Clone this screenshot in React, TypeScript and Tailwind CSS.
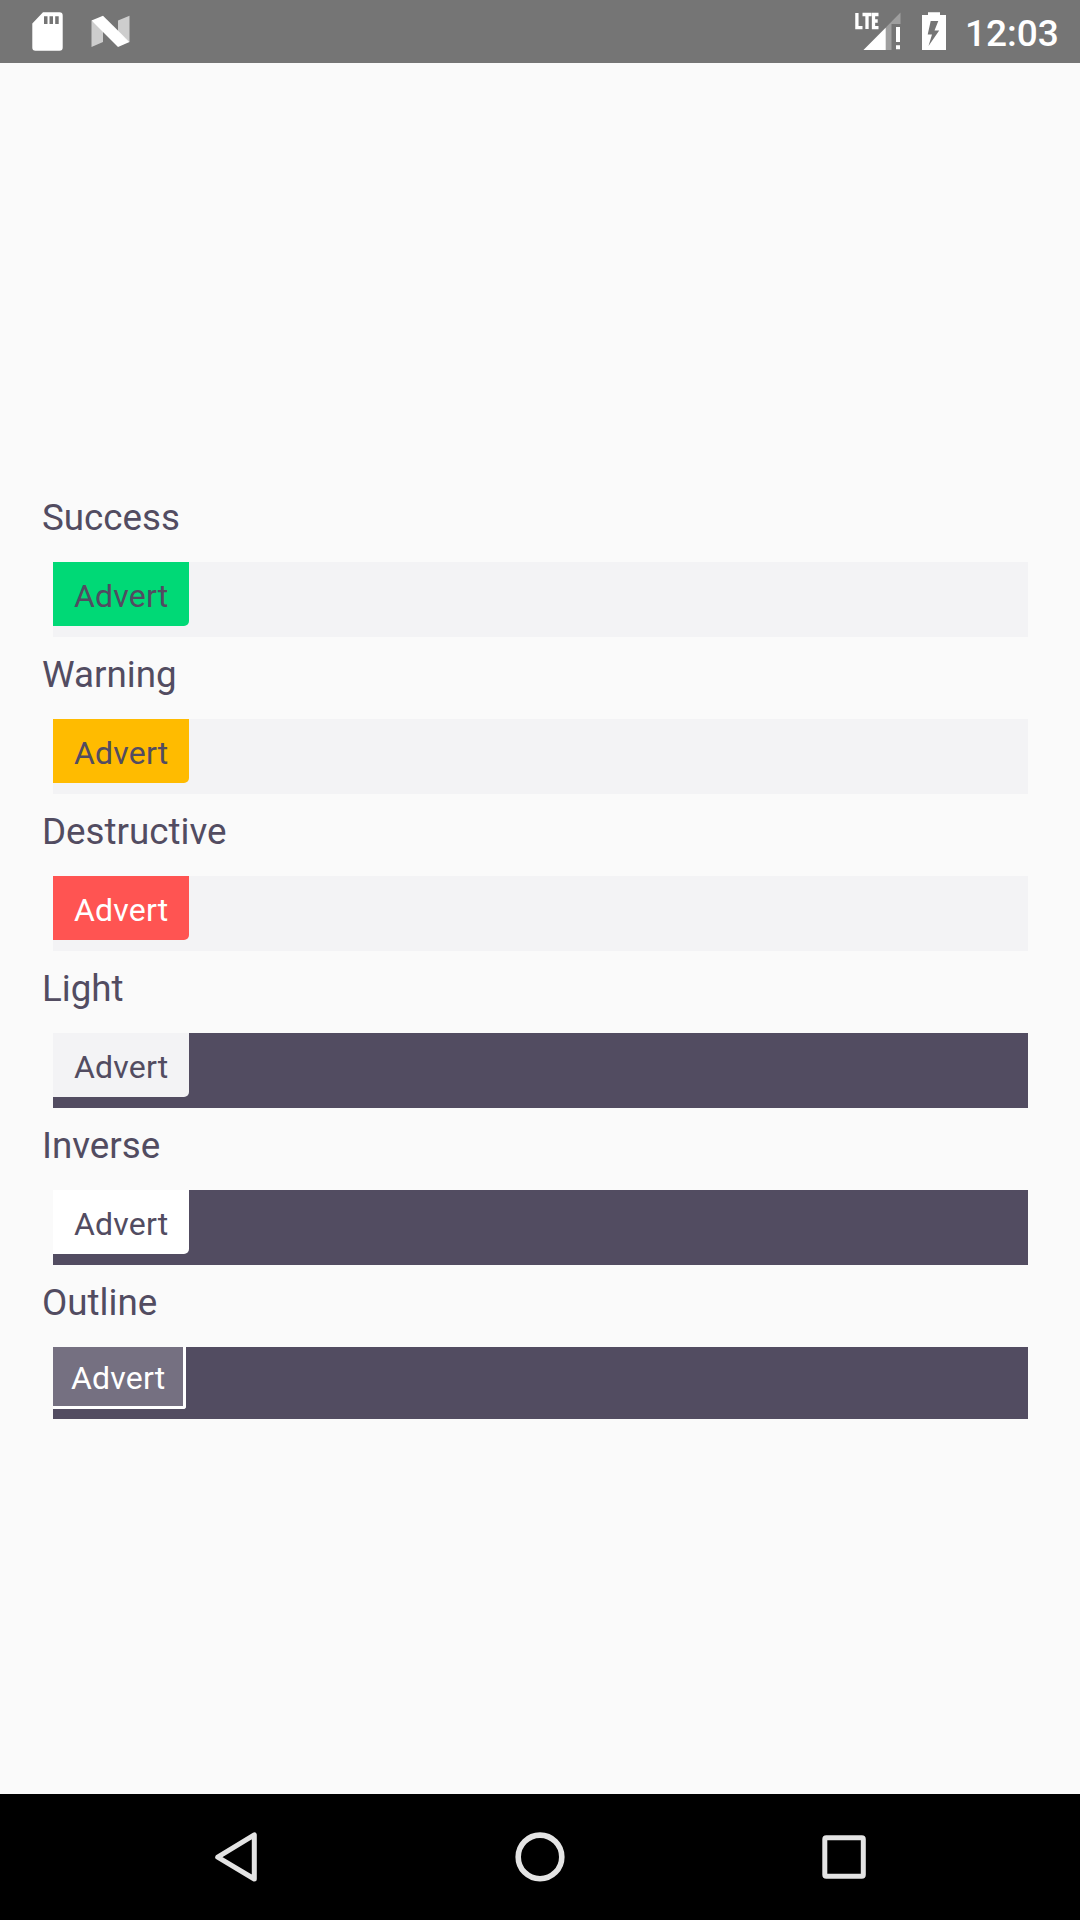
const rows = [
  { label: 'Success', bar: 'bg-[#f3f3f5]', badge: 'bg-[#00d976] text-[#524c61]' },
  { label: 'Warning', bar: 'bg-[#f3f3f5]', badge: 'bg-[#ffbb00] text-[#524c61]' },
  { label: 'Destructive', bar: 'bg-[#f3f3f5]', badge: 'bg-[#ff5452] text-white' },
  { label: 'Light', bar: 'bg-[#524c61]', badge: 'bg-[#f3f3f5] text-[#524c61]' },
  { label: 'Inverse', bar: 'bg-[#524c61]', badge: 'bg-white text-[#524c61]' },
  { label: 'Outline', bar: 'bg-[#524c61]', badge: 'bg-[#757081] text-white', outline: true },
];

function StatusBar() {
  return (
    <header className="flex h-[63px] shrink-0 items-start bg-[#757575] text-white">
      <svg width="180" height="63" viewBox="0 0 180 63">
        <path fillRule="evenodd" fill="#fff" d="M43 12.3H59.5A3.2 3.2 0 0 1 62.7 15.500V47.500A3.200 3.200 0 0 1 59.500 50.700H35.500A3.200 3.200 0 0 1 32.300 47.500V23.500ZM44 16.300V24H47.500V16.300ZM49.500 16.300V24H53V16.300ZM55.200 16.300V24H58.700V16.300Z" />
        <path fill="#cdcdcd" d="M91.500 20.500L103 29V42L91.500 47ZM118 20.500L129.500 15.700V42L118 32Z" />
        <path fill="#fff" d="M91.500 20.500L103 15.700L129.500 42L118 47Z" />
      </svg>
      <svg className="ml-auto" width="114" height="63" viewBox="846 0 114 63">
        <path fill="#9f9f9f" d="M900.500 12.500V24H891.500V50H863.500Z" />
        <path fill="#fff" d="M863.500 50L885.700 27.800V50ZM896 27H900V42H896ZM896 45.300H900V49.300H896Z" />
        <path fill="none" stroke="#fff" strokeWidth="3.300" d="M856.900 13V27.700H862.500M862.500 14.500H871.500M867 14.500V29M878.500 14.500H873.500V27.700H878.500M873.500 21H877.700" />
        <path fillRule="evenodd" fill="#fff" d="M928 12.200H940V15H946V50H922V15H928ZM930.700 21L927.700 34.500H932L928.500 46L939.200 30.500H934.500L938.300 21Z" />
      </svg>
      <time className="w-[120px] pl-[5px] text-[37px] leading-[67px] font-medium">12:03</time>
    </header>
  );
}

function NavigationBar() {
  return (
    <nav className="grid h-[126px] shrink-0 grid-cols-[304px_304px_304px] justify-center bg-black">
      <svg className="size-full" viewBox="84 1794 304 126" fill="none" stroke="#e4e4e4" strokeWidth="5" strokeLinejoin="round">
        <path d="M217.700 1857.200L254.300 1834.800V1879Z" />
      </svg>
      <svg className="size-full" viewBox="388 1794 304 126" fill="none" stroke="#e4e4e4" strokeWidth="5.600">
        <circle cx="540" cy="1856.900" r="21.800" />
      </svg>
      <svg className="size-full" viewBox="692 1794 304 126" fill="none" stroke="#e4e4e4" strokeWidth="5">
        <rect x="824.800" y="1837.800" width="38.500" height="38.500" rx="1.500" />
      </svg>
    </nav>
  );
}

export default function App() {
  return (
    <div className="flex h-[1920px] w-[1080px] flex-col bg-[#fafafa] font-['Roboto',sans-serif]">
      <StatusBar />
      <main className="flex-1 pt-[417px]">
        {rows.map((row) => (
          <section key={row.label}>
            <h2 className="h-[82px] pt-[14px] pl-[42px] text-[36.750px] leading-[48px] text-[#524c61]">{row.label}</h2>
            <div className={`mr-[52px] ml-[53px] flex items-start ${row.outline ? 'h-[72px]' : 'h-[75px]'} ${row.bar}`}>
              <span
                className={`text-[32px] tracking-[0.200px] ${row.badge} ${
                  row.outline
                    ? 'h-[62px] w-[133px] rounded-br-[3px] border-r-[3px] border-b-[3px] border-white pl-[18px] leading-[63px]'
                    : 'h-[64px] w-[136px] rounded-br-[5px] pl-[21px] leading-[69px]'
                }`}
              >
                Advert
              </span>
            </div>
          </section>
        ))}
      </main>
      <NavigationBar />
    </div>
  );
}
